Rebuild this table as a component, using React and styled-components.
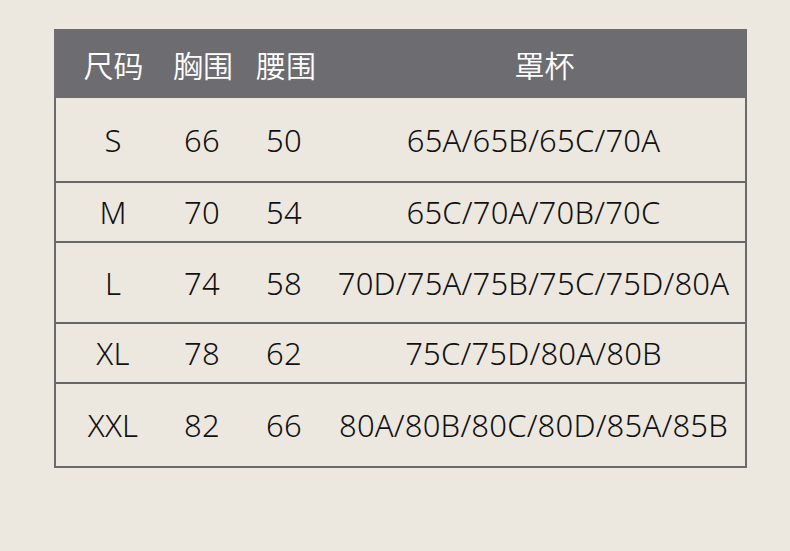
import styled, { createGlobalStyle } from 'styled-components'

const GlobalStyle = createGlobalStyle`
  html, body {
    margin: 0;
    padding: 0;
    background: #ece8e0;
  }
  body {
    font-family: "Noto Sans", "Noto Sans CJK SC", sans-serif;
  }
`

const Page = styled.div`
  width: 790px;
  height: 551px;
  padding: 29px 0 0 54px;
  box-sizing: border-box;
  background: #ece8e0;
`

const Table = styled.div`
  width: 693px;
`

const Header = styled.div`
  display: grid;
  grid-template-columns: 116px 64px 100px 1fr;
  height: 69px;
  align-items: center;
  background: #6d6c71;
  color: #fff;
  font-family: "Noto Sans CJK SC", sans-serif;
  font-size: 30px;
  font-weight: 350;
`

const HeadCell = styled.div`
  text-align: center;
  white-space: nowrap;
  padding-left: ${props => props.shift || 0}px;
`

const Body = styled.div`
  border: 2px solid #6a6a6a;
  border-top: none;
`

const Row = styled.div`
  display: grid;
  grid-template-columns: 114px 64px 100px 1fr;
  align-items: center;
  height: ${props => props.h}px;
  box-sizing: border-box;
  border-top: ${props => props.boxed ? '2px solid #666' : 'none'};
  border-bottom: ${props => props.boxed ? '2px solid #666' : 'none'};
  color: #111;
  font-size: 31px;
  font-weight: 350;
  letter-spacing: 0.2px;
`

const Cell = styled.div`
  text-align: center;
  white-space: nowrap;
  padding-right: ${props => props.pad || 0}px;
`

const rows = [
  { size: 'S', bust: '66', waist: '50', cup: '65A/65B/65C/70A', h: 83 },
  { size: 'M', bust: '70', waist: '54', cup: '65C/70A/70B/70C', h: 62, boxed: true },
  { size: 'L', bust: '74', waist: '58', cup: '70D/75A/75B/75C/75D/80A', h: 79 },
  { size: 'XL', bust: '78', waist: '62', cup: '75C/75D/80A/80B', h: 62, boxed: true },
  { size: 'XXL', bust: '82', waist: '66', cup: '80A/80B/80C/80D/85A/85B', h: 82 },
]

const App = () => {
  return (
    <Page>
      <GlobalStyle />
      <Table>
        <Header>
          <HeadCell shift={3}>尺码</HeadCell>
          <HeadCell shift={2}>胸围</HeadCell>
          <HeadCell shift={4}>腰围</HeadCell>
          <HeadCell shift={8}>罩杯</HeadCell>
        </Header>
        <Body>
          {rows.map(r => (
            <Row key={r.size} h={r.h} boxed={r.boxed}>
              <Cell>{r.size}</Cell>
              <Cell>{r.bust}</Cell>
              <Cell>{r.waist}</Cell>
              <Cell pad={12}>{r.cup}</Cell>
            </Row>
          ))}
        </Body>
      </Table>
    </Page>
  )
}

export default App
